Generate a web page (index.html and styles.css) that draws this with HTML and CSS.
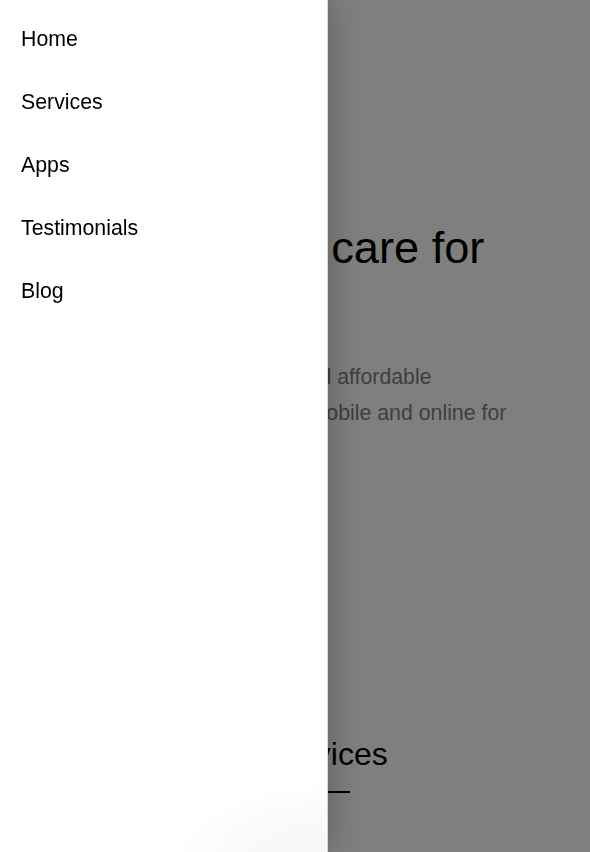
FILE: index.html
```html
<!DOCTYPE html>
<html lang="en">
<head>
<meta charset="utf-8">
<title>Health care</title>
<link rel="stylesheet" href="styles.css">
</head>
<body>
<main class="page">
  <section class="hero">
    <h1 class="hero-title">Quality care for</h1>
    <p class="hero-text">
      <span class="hero-line line-1">Accessible and affordable</span>
      <span class="hero-line line-2">on mobile and online for</span>
    </p>
  </section>
  <section class="services">
    <h2 class="section-title">Services</h2>
    <div class="section-bar"></div>
  </section>
</main>
<div class="overlay"></div>
<nav class="drawer">
  <ul class="drawer-menu">
    <li><a class="drawer-link" href="#">Home</a></li>
    <li><a class="drawer-link" href="#">Services</a></li>
    <li><a class="drawer-link" href="#">Apps</a></li>
    <li><a class="drawer-link" href="#">Testimonials</a></li>
    <li><a class="drawer-link" href="#">Blog</a></li>
  </ul>
</nav>
</body>
</html>
```
FILE: styles.css
```css
* { box-sizing: border-box; }
html, body {
  margin: 0;
  padding: 0;
  height: 100%;
  background: #ffffff;
  font-family: "Liberation Sans", Arial, sans-serif;
  overflow: hidden;
}
.page {
  display: flex;
  flex-direction: column;
  padding-top: 221px;
}
.hero-title {
  margin: 0;
  font-size: 45.2px;
  line-height: 53.76px;
  font-weight: 400;
  color: #000;
  white-space: nowrap;
  padding-left: 178px;
}
.hero-text {
  margin: 84px 0 0 0;
  font-size: 21.3px;
  line-height: 36.4px;
  color: #7e7e80;
  display: flex;
  flex-direction: column;
}
.hero-line { white-space: nowrap; }
.line-1 { padding-left: 188px; }
.line-2 { padding-left: 279px; }
.services {
  margin-top: 303px;
  display: flex;
  flex-direction: column;
  padding-left: 265px;
}
.section-title {
  margin: 0;
  font-size: 32px;
  line-height: 38.4px;
  font-weight: 400;
  color: #000;
  white-space: nowrap;
}
.section-bar {
  margin: 18px 0 0 35px;
  width: 50px;
  height: 2px;
  background: #000;
}
.overlay {
  position: fixed;
  inset: 0;
  background: rgba(0, 0, 0, 0.5);
}
.drawer {
  position: fixed;
  top: 0;
  left: 0;
  bottom: 0;
  width: 328px;
  background: #fff;
  border-right: 1px solid #d6d6d6;
  box-shadow: 0 0 34px rgba(0, 0, 0, 0.28);
  overflow: hidden;
}
.drawer::after {
  content: "";
  position: absolute;
  left: 170px;
  top: 780px;
  width: 330px;
  height: 170px;
  background: radial-gradient(ellipse at center, rgba(0,0,0,0.04) 0%, rgba(0,0,0,0.02) 45%, rgba(0,0,0,0) 70%);
}
.drawer-menu {
  list-style: none;
  margin: 0;
  padding: 8px 0 0 0;
  display: flex;
  flex-direction: column;
}
.drawer-link {
  display: block;
  padding: 16px 21px;
  font-size: 21.3px;
  line-height: 31px;
  color: #000;
  text-decoration: none;
}
```
